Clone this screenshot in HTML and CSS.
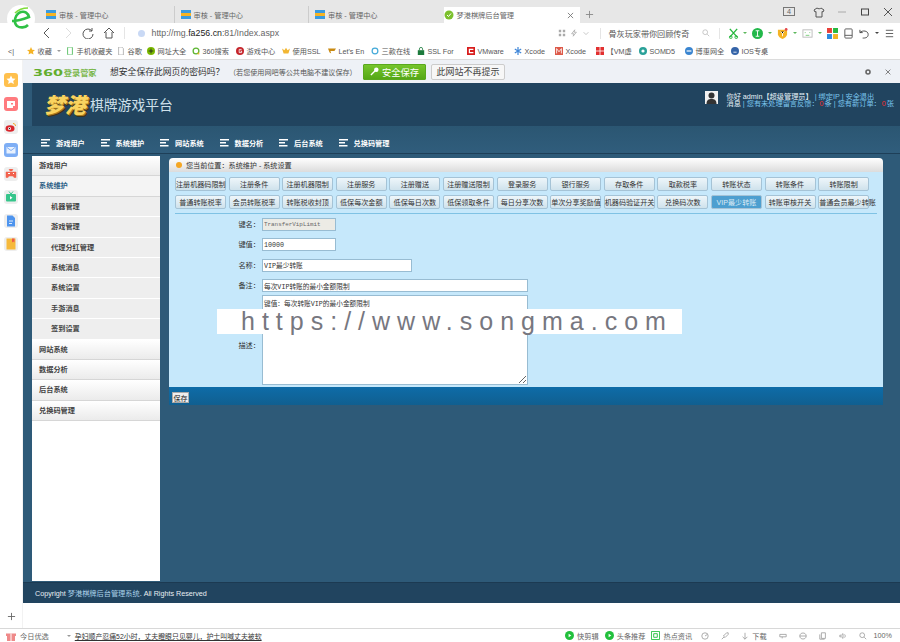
FILE: index.html
```html
<!DOCTYPE html>
<html lang="zh-CN">
<head>
    <meta charset="UTF-8">
    <title>梦港棋牌后台管理</title>
    <link rel="stylesheet" href="styles.css">
</head>
<body>

<!-- browser logo sits over tab bar and toolbar -->
<svg class="browser-logo" viewBox="0 0 28 28">
    <circle cx="14" cy="14" r="14" fill="#fff"/>
    <path d="M5 16c7 0 12-2 17-4-1-4-4-6-8-5-6 2-8 10-4 14 3 2 8 2 11-1" fill="none" stroke="#2fc145" stroke-width="2.6"/>
    <path d="M8 8c3-3 8-5 13-5" fill="none" stroke="#7fdc3c" stroke-width="1.6"/>
</svg>

<div class="tabbar">
    <div class="tab"><span class="tab-icon"></span>审核 - 管理中心</div>
    <div class="tab"><span class="tab-icon"></span>审核 - 管理中心</div>
    <div class="tab"><span class="tab-icon"></span>审核 - 管理中心</div>
    <div class="tab tab-active">
        <svg class="ico-s" viewBox="0 0 10 10"><circle cx="5" cy="5" r="4.5" fill="#7cc02c"/><path d="M3 5l1.5 1.5L7 3.500" stroke="#fff" fill="none"/></svg>
        <span class="tab-title">梦港棋牌后台管理</span>
        <svg class="tab-close" viewBox="0 0 8 8"><path d="M1 1l6 6M7 1L1 7" stroke="#777"/></svg>
    </div>
    <svg class="tab-plus" viewBox="0 0 10 10"><path d="M5 1v8M1 5h8" stroke="#888"/></svg>
    <div class="win-btns">
        <span class="win-count">4</span>
        <svg viewBox="0 0 12 12"><path d="M4 2L1 4l1 2 1-.5V11h6V5.500l1 .5 1-2-3-2c-.5 1-3 1-4 0z" fill="none" stroke="#555"/></svg>
        <svg viewBox="0 0 12 12"><path d="M2 6h8" stroke="#aaa"/></svg>
        <svg viewBox="0 0 12 12"><rect x="2.500" y="3" width="7" height="6" fill="none" stroke="#444"/></svg>
        <svg viewBox="0 0 12 12"><path d="M2 2l8 8M10 2l-8 8" stroke="#555"/></svg>
    </div>
</div>

<div class="toolbar">
    <div class="nav-btns">
        <svg viewBox="0 0 12 12"><path d="M8 1L3 6l5 5" fill="none" stroke="#555"/></svg>
        <svg viewBox="0 0 12 12"><path d="M4 1l5 5-5 5" fill="none" stroke="#ddd"/></svg>
        <svg viewBox="0 0 12 12"><path d="M10 4a5 5 0 1 0 1 3M10 1v3H7" fill="none" stroke="#555"/></svg>
        <svg viewBox="0 0 12 12"><path d="M1 6l5-5 5 5M3 5v6h6V5" fill="none" stroke="#555"/></svg>
    </div>
    <div class="address">
        <span class="addr-dot"></span>
        <span class="addr-url">http://mg.<b>fa256.cn</b>:81/Index.aspx</span>
    </div>
    <div class="addr-tools">
        <svg viewBox="0 0 10 10"><path d="M1 1h3v3H1zM6 1h3v3H6zM1 6h3v3H1zM6 6h3v3H6z" fill="#aaa"/></svg>
        <svg viewBox="0 0 10 10"><path d="M6 1L2 6h3l-1 3 4-5H5z" fill="none" stroke="#aaa"/></svg>
        <svg viewBox="0 0 10 10"><path d="M2 4l3 3 3-3" fill="none" stroke="#bbb"/></svg>
    </div>
    <div class="search">
        <span class="search-text">骨灰玩家带你回顾传奇</span>
        <svg viewBox="0 0 10 10"><circle cx="4" cy="4" r="3" fill="none" stroke="#bbb"/><path d="M6.500 6.500L9 9" stroke="#bbb"/></svg>
    </div>
    <div class="ext-icons">
        <svg viewBox="0 0 12 12"><path d="M2 1l8 9M10 1L2 10" stroke="#27b83f" stroke-width="1.500"/><circle cx="3" cy="10" r="1.500" fill="none" stroke="#27b83f"/><circle cx="9" cy="10" r="1.500" fill="none" stroke="#27b83f"/></svg>
        <i class="caret"></i>
        <svg viewBox="0 0 12 12"><circle cx="6" cy="6" r="6" fill="#22b84a"/><path d="M4 3h4M6 3v6M4 9h4" stroke="#fff"/></svg>
        <i class="caret"></i>
        <svg viewBox="0 0 12 12"><path d="M1 2h10v5c0 2-3 4-5 5-2-1-5-3-5-5z" fill="#f5b324"/><circle cx="10" cy="1.500" r="1.500" fill="#e5484d"/><path d="M4 4l2 2 2-2M6 6v3" stroke="#fff"/></svg>
        <i class="caret"></i>
        <svg viewBox="0 0 12 12"><rect x="1" y="2" width="10" height="8" fill="none" stroke="#bbb"/><path d="M3 5h1M8 5h1M4 8h4" stroke="#7c7"/></svg>
        <i class="caret"></i>
        <svg viewBox="0 0 10 10"><rect width="4.500" height="4.500" fill="#e8403a"/><rect x="5.500" width="4.500" height="4.500" fill="#27b83f"/><rect y="5.500" width="4.500" height="4.500" fill="#2d8be0"/><rect x="5.500" y="5.500" width="4.500" height="4.500" fill="#f5b324"/></svg>
        <svg viewBox="0 0 12 12"><rect x="2" y="1" width="8" height="10" rx="1" fill="none" stroke="#555"/><path d="M2 8h8" stroke="#555"/></svg>
        <svg viewBox="0 0 12 12"><path d="M1 2v3h3M1 5c3-3 9-2 9 2s-4 4-6 4" fill="none" stroke="#444"/></svg>
        <i class="caret caret-dark"></i>
        <svg viewBox="0 0 12 12"><path d="M2 2.500h8M2 6h8M2 9.500h8" stroke="#555"/></svg>
    </div>
</div>

<div class="bookmarks">
    <span class="bm-toggle">&lt;|</span>
    <span class="bm w39"><svg viewBox="0 0 10 10"><path d="M5 0l1.500 3.300 3.500.4-2.600 2.300.8 3.500L5 7.700 1.800 9.500l.8-3.500L0 3.700l3.500-.4z" fill="#f5b324"/></svg>收藏 <i class="caret caret-grey"></i></span>
    <span class="bm w51"><svg viewBox="0 0 10 10"><rect x="2" y="0" width="6" height="10" rx="1" fill="none" stroke="#3db54a"/></svg>手机收藏夹</span>
    <span class="bm w30"><svg viewBox="0 0 10 10"><path d="M2 0h4l2 2v8H2z" fill="none" stroke="#aaa"/></svg>谷歌</span>
    <span class="bm w45"><svg viewBox="0 0 10 10"><circle cx="5" cy="5" r="5" fill="#7ab800"/><path d="M2 5h6M5 2v6" stroke="#222"/></svg>网址大全</span>
    <span class="bm w44"><svg viewBox="0 0 10 10"><circle cx="5" cy="5" r="3.600" fill="none" stroke="#5cb531" stroke-width="1.600"/><path d="M7 7l2 2" stroke="#f5b324" stroke-width="1.600"/></svg>360搜索</span>
    <span class="bm w46"><svg viewBox="0 0 10 10"><circle cx="5" cy="5" r="5" fill="#c5252b"/><path d="M7 3H4v4h3V5H5.500" stroke="#fff" fill="none"/></svg>游戏中心</span>
    <span class="bm w46"><svg viewBox="0 0 10 10"><path d="M0 2l2 6h6l2-6-3 2-2-3-2 3z" fill="#f2b632"/></svg>使用SSL</span>
    <span class="bm w43"><svg viewBox="0 0 10 10"><path d="M0 2h10L8 5H3l1 3L2 7z" fill="#c98a12"/></svg>Let's En</span>
    <span class="bm w46"><svg viewBox="0 0 10 10"><circle cx="5" cy="5" r="3.600" fill="none" stroke="#43a9d8" stroke-width="1.500"/></svg>三款在线</span>
    <span class="bm w50"><svg viewBox="0 0 10 10"><rect x="1" y="4" width="8" height="6" fill="#1c7a3c"/><path d="M3 4V2.500a2 2 0 0 1 4 0V4" fill="none" stroke="#1c7a3c"/></svg>SSL For</span>
    <span class="bm w47"><svg viewBox="0 0 10 10"><rect width="10" height="10" fill="#d81e1e"/><path d="M8 3H3v4h5" stroke="#fff" stroke-width="1.500" fill="none"/></svg>VMware</span>
    <span class="bm w41"><svg viewBox="0 0 10 10"><path d="M5 0v10M1 2.500l8 5M9 2.500l-8 5" stroke="#3f86d8" stroke-width="1.500"/></svg>Xcode</span>
    <span class="bm w41"><svg viewBox="0 0 10 10"><rect width="10" height="10" fill="#dd5a4a"/><path d="M2 8V2l3 4 3-4v6" stroke="#fff" fill="none"/></svg>Xcode</span>
    <span class="bm w43"><svg viewBox="0 0 10 10"><rect width="10" height="10" fill="#e23030"/><path d="M0 5h10M5 0v10" stroke="#fff"/></svg>【VM虚</span>
    <span class="bm w46"><svg viewBox="0 0 10 10"><circle cx="5" cy="5" r="5" fill="#2aa198"/><circle cx="5" cy="5" r="2" fill="#fff"/></svg>SOMD5</span>
    <span class="bm w46"><svg viewBox="0 0 10 10"><circle cx="5" cy="5" r="5" fill="#3a85d0"/><path d="M2 5h6" stroke="#fff" stroke-width="1.500"/></svg>博惠网全</span>
    <span class="bm"><svg viewBox="0 0 10 10"><circle cx="5" cy="5" r="5" fill="#3564a8"/><path d="M3 6.500h4" stroke="#fff"/></svg>IOS专桌</span>
</div>

<div class="frame">
    <div class="rail">
        <span class="rail-btn"><svg viewBox="0 0 14 14"><rect width="14" height="14" rx="3" fill="#ffc04d"/><path d="M7 2.500l1.400 3 3.100.3-2.300 2.100.7 3.100L7 9.500l-2.900 1.500.7-3.100-2.300-2.100 3.100-.3z" fill="#fff"/></svg></span>
        <span class="rail-btn"><svg viewBox="0 0 14 14"><rect width="14" height="14" rx="3" fill="#ff7b7f"/><path d="M3 4h8v5H9v2H3z" fill="#fff"/><path d="M7 6h2v1.500H7z" fill="#ff7b7f"/></svg></span>
        <span class="rail-btn"><svg viewBox="0 0 14 14"><rect width="14" height="14" rx="3" fill="#eee"/><ellipse cx="6" cy="8.500" rx="4.500" ry="3.300" fill="#d9262c"/><circle cx="5.500" cy="8.500" r="1.500" fill="#fff"/><circle cx="5.500" cy="8.500" r=".7" fill="#222"/><path d="M9 3.500c1.500 0 2.500 1 2.500 2.500" fill="none" stroke="#f5a623"/></svg></span>
        <span class="rail-btn"><svg viewBox="0 0 14 14"><rect width="14" height="14" rx="3" fill="#7eaef5"/><rect x="2.500" y="4" width="9" height="6.500" rx=".6" fill="#e8f1fe"/><path d="M3 4.500l4 3 4-3" fill="none" stroke="#7eaef5"/></svg></span>
        <span class="rail-btn"><svg viewBox="0 0 14 14"><rect width="14" height="14" rx="3" fill="#eee"/><path d="M5 2l1 2h2l1-2M2 5h10v5.500h-2L9 9H5l-1 1.500H2z" fill="#f2624d" stroke="#f2624d" stroke-width=".5"/><path d="M4 6.500h2M9 6.500h1" stroke="#fff"/></svg></span>
        <span class="rail-btn"><svg viewBox="0 0 14 14"><rect width="14" height="14" rx="3" fill="#eee"/><rect x="2" y="4" width="10" height="7.500" rx="1" fill="#36c58b"/><path d="M5 1.500l2 2.500 2-2.500" fill="none" stroke="#36c58b"/><path d="M6 6l2.500 1.700L6 9.500z" fill="#fff"/></svg></span>
        <span class="rail-btn"><svg viewBox="0 0 14 14"><rect width="14" height="14" rx="3" fill="#eee"/><path d="M3 1.500h5.500L11 4v8.500H3z" fill="#4e94ee"/><path d="M5 7h4M5 9.500h3" stroke="#dcebfd"/></svg></span>
        <span class="rail-btn"><svg viewBox="0 0 14 14"><rect width="14" height="14" rx="3" fill="#eee"/><rect x="2.500" y="1.500" width="9" height="11" fill="#f6b93b"/><path d="M8 1.500h2.500v4L9.200 4.500 8 5.500z" fill="#ef5a4a"/></svg></span>
        <svg class="rail-add" viewBox="0 0 10 10"><path d="M5 1v8M1 5h8" stroke="#666"/></svg>
    </div>

    <div class="window">
        <div class="passbar">
            <span class="pass-brand"><b>360</b>登录管家</span>
            <span class="pass-ask">想安全保存此网页的密码吗？</span>
            <span class="pass-note">（若您使用网吧等公共电脑不建议保存）</span>
            <button class="pass-save">
                <svg viewBox="0 0 10 10"><circle cx="7" cy="3" r="2.500" fill="#fff"/><path d="M6 4L1 9" stroke="#fff" stroke-width="1.500"/></svg>
                安全保存
            </button>
            <button class="pass-never">此网站不再提示</button>
            <span class="pass-right">
                <svg viewBox="0 0 10 10"><circle cx="5" cy="5" r="2.500" fill="none" stroke="#666" stroke-width="2"/></svg>
                <svg viewBox="0 0 10 10"><path d="M2 2l6 6M8 2L2 8" stroke="#666"/></svg>
            </span>
        </div>

        <div class="page">
            <div class="header">
                <div class="brand">
                    <span class="brand-logo">梦港</span>
                    <span class="brand-name">棋牌游戏平台</span>
                </div>
                <div class="user">
                    <svg class="avatar" viewBox="0 0 13 13"><rect width="13" height="13" fill="#f2f2f2"/><circle cx="6.500" cy="4.500" r="3" fill="#333"/><path d="M1.500 13c0-4 2-5 5-5s5 1 5 5z" fill="#333"/></svg>
                    <div class="user-lines">
                        <div><span class="hl">你好 admin【超级管理员】</span> | 绑定IP | 安全退出</div>
                        <div><span class="hl">消息</span> | 您有未处理留言反馈：<em>0</em>条 | 您有新订单：<em>0</em>张</div>
                    </div>
                </div>
            </div>

            <div class="mainnav">
                <span class="nav-item">游戏用户</span>
                <span class="nav-item">系统维护</span>
                <span class="nav-item">网站系统</span>
                <span class="nav-item">数据分析</span>
                <span class="nav-item">后台系统</span>
                <span class="nav-item">兑换码管理</span>
            </div>

            <div class="work">
                <div class="sidebar">
                    <div class="side-top">游戏用户</div>
                    <div class="side-top side-open">系统维护</div>
                    <div class="side-sub">机器管理</div>
                    <div class="side-sub">游戏管理</div>
                    <div class="side-sub">代理分红管理</div>
                    <div class="side-sub">系统消息</div>
                    <div class="side-sub">系统设置</div>
                    <div class="side-sub">手游消息</div>
                    <div class="side-sub">签到设置</div>
                    <div class="side-top">网站系统</div>
                    <div class="side-top">数据分析</div>
                    <div class="side-top">后台系统</div>
                    <div class="side-top">兑换码管理</div>
                </div>

                <div class="panel">
                    <div class="crumbs">
                        <span class="crumb-dot"></span>
                        <span>您当前位置：系统维护 - 系统设置</span>
                    </div>
                    <div class="panel-body">
                        <div class="key-tabs">
                            <button class="key-tab">注册机器码限制</button>
                            <button class="key-tab">注册条件</button>
                            <button class="key-tab">注册机器限制</button>
                            <button class="key-tab">注册服务</button>
                            <button class="key-tab">注册赠送</button>
                            <button class="key-tab">注册赠送限制</button>
                            <button class="key-tab">登录服务</button>
                            <button class="key-tab">银行服务</button>
                            <button class="key-tab">存取条件</button>
                            <button class="key-tab">取款税率</button>
                            <button class="key-tab">转账状态</button>
                            <button class="key-tab">转账条件</button>
                            <button class="key-tab">转账限制</button>
                            <button class="key-tab">普通转账税率</button>
                            <button class="key-tab">会员转账税率</button>
                            <button class="key-tab">转账税收封顶</button>
                            <button class="key-tab">低保每次金额</button>
                            <button class="key-tab">低保每日次数</button>
                            <button class="key-tab">低保领取条件</button>
                            <button class="key-tab">每日分享次数</button>
                            <button class="key-tab">单次分享奖励值</button>
                            <button class="key-tab">机器码验证开关</button>
                            <button class="key-tab">兑换码次数</button>
                            <button class="key-tab key-tab-on">VIP最少转账</button>
                            <button class="key-tab">转账审核开关</button>
                            <button class="key-tab">普通会员最少转账</button>
                        </div>
                        <div class="form">
                            <label class="field">
                                <span class="field-label">键名：</span>
                                <input class="field-short field-mono" value="TransferVipLimit" readonly>
                            </label>
                            <label class="field">
                                <span class="field-label">键值：</span>
                                <input class="field-short field-white" value="10000">
                            </label>
                            <label class="field">
                                <span class="field-label">名称：</span>
                                <input class="field-mid field-white" value="VIP最少转账">
                            </label>
                            <label class="field field-tight">
                                <span class="field-label">备注：</span>
                                <input class="field-long field-white" value="每次VIP转账的最小金额限制">
                            </label>
                            <label class="field field-area">
                                <span class="field-label">描述：</span>
                                <textarea class="field-long field-white">键值：每次转账VIP的最小金额限制</textarea>
                            </label>
                        </div>
                    </div>
                    <div class="panel-foot"><button class="save-btn">保存</button></div>
                </div>
            </div>

            <div class="footer">Copyright <span class="footer-name">梦港棋牌后台管理系统</span>. All Rights Reserved</div>
        </div>
        <div class="page-gap"></div>
    </div>
</div>

<div class="statusbar">
    <svg class="ico-s" viewBox="0 0 10 10"><path d="M0 2.500h10V5H0zM1 5h8v5H1z" fill="#ef8a8a"/><path d="M5 2.500V10" stroke="#fff"/></svg>
    <span class="st-today">今日优选</span>
    <i class="caret st-caret"></i>
    <span class="st-news">孕妇顺产忍痛52小时，丈夫瞪眼只见婴儿，护士叫喊丈夫被软</span>
    <span class="st-right">
        <span class="st-feeds">
            <span class="st-item"><svg viewBox="0 0 10 10"><circle cx="5" cy="5" r="5" fill="#22c03c"/><path d="M4 3l3 2-3 2z" fill="#fff"/></svg>快剪辑</span>
            <span class="st-item"><svg viewBox="0 0 10 10"><circle cx="5" cy="5" r="5" fill="#22c03c"/><path d="M4 3l3 2-3 2z" fill="#fff"/></svg>头条推荐</span>
            <span class="st-item"><svg viewBox="0 0 10 10"><path d="M.500.500h9v9h-9zM3 3h4v4H3z" fill="none" stroke="#22c03c"/></svg>热点资讯</span>
        </span>
        <svg class="st-ico" viewBox="0 0 10 10"><circle cx="5" cy="5" r="4" fill="none" stroke="#999"/><path d="M5 5l3-2" stroke="#999"/></svg>
        <svg class="st-ico" viewBox="0 0 10 10"><path d="M1 9l3-3M3 5l4-4h2v2L5 7z" fill="none" stroke="#999"/></svg>
        <span class="st-item"><svg viewBox="0 0 10 10"><path d="M5 1v8M2 6l3 3 3-3" fill="none" stroke="#999"/></svg>下载</span>
        <svg class="st-ico" viewBox="0 0 10 10"><path d="M1 3h8v3H1zM4 6v2" fill="none" stroke="#999"/></svg>
        <svg class="st-ico" viewBox="0 0 10 10"><path d="M1 5c0-5 8-5 8 0s-8 5-8 0M1 5h8" fill="none" stroke="#999"/></svg>
        <svg class="st-ico" viewBox="0 0 10 10"><path d="M3 1h5v7H3zM1 3v6h6" fill="none" stroke="#999"/></svg>
        <svg class="st-ico" viewBox="0 0 10 10"><path d="M1 4h2l2-2v6L3 6H1zM7 3c1 1 1 3 0 4" fill="none" stroke="#999"/></svg>
        <svg class="st-ico" viewBox="0 0 10 10"><circle cx="4" cy="4" r="3" fill="none" stroke="#999"/><path d="M6.500 6.500L9 9" stroke="#999"/></svg>
        <span class="st-zoom">100%</span>
    </span>
</div>

<div class="watermark">https://www.songma.com</div>

</body>
</html>
```

FILE: styles.css
```css
* {
    box-sizing: border-box;
}
html, body {
    margin: 0;
    height: 100%;
}
body {
    position: relative;
    width: 900px;
    height: 642px;
    overflow: hidden;
    display: flex;
    flex-direction: column;
    background: #fff;
    color: #333;
    font-family: "Liberation Sans", "Noto Sans CJK SC", sans-serif;
    font-size: 7.200px;
}
svg {
    flex: none;
    display: block;
}
i, em {
    font-style: normal;
}
button, input, textarea {
    font-family: inherit;
}
.caret {
    flex: none;
    width: 0;
    height: 0;
    border: 2px solid transparent;
    border-top: 2px solid #5cb85c;
    border-bottom: 0;
}
.caret-dark {
    border-top-color: #444;
}
.caret-grey {
    border-top-color: #999;
    margin-left: 3px;
}
.ico-s {
    width: 10px;
    height: 10px;
}

/* browser chrome */
.browser-logo {
    position: absolute;
    left: 7px;
    top: 5px;
    width: 28px;
    height: 28px;
}
.tabbar {
    height: 23px;
    flex: none;
    display: flex;
    align-items: center;
    padding: 0 0 0 40px;
    background: #e7e7e7;
    color: #666;
}
.tab {
    width: 134.500px;
    height: 17px;
    margin-top: 6px;
    display: flex;
    align-items: center;
    gap: 3px;
    padding-left: 6px;
    border-right: 1px solid #ccc;
}
.tab:nth-child(n+3) {
    border-right: 0;
}
.tab-icon {
    width: 10px;
    height: 9px;
    background: linear-gradient(#3a9be0 0 33%, #f5b324 33% 66%, #3a9be0 66%);
}
.tab-active {
    width: 136px;
    height: 16px;
    margin-top: 7px;
    padding-left: 0;
    background: #fff;
}
.tab-title {
    flex: 1;
}
.tab-close {
    width: 7px;
    height: 7px;
    margin-right: 6px;
}
.tab-plus {
    width: 9px;
    height: 9px;
    margin: 5px 0 0 5px;
}
.win-btns {
    margin-left: auto;
    display: flex;
    align-items: center;
    gap: 11px;
    padding-right: 6px;
}
.win-btns svg {
    width: 12px;
    height: 12px;
}
.win-count {
    width: 12px;
    height: 9px;
    border: 1px solid #777;
    line-height: 7px;
    text-align: center;
    margin-right: 7px;
}
.toolbar {
    height: 20px;
    flex: none;
    display: flex;
    align-items: center;
    padding-left: 41px;
}
.nav-btns {
    display: flex;
    gap: 8.500px;
    padding-right: 9px;
    border-right: 1px solid #e5e5e5;
}
.nav-btns svg {
    width: 12px;
    height: 12px;
}
.address {
    width: 420px;
    margin-left: 13px;
    display: flex;
    align-items: center;
    gap: 7px;
    font-size: 8.800px;
    color: #666;
}
.addr-dot {
    width: 7px;
    height: 7px;
    border-radius: 50%;
    background: #c9d9f5;
}
.addr-url b {
    font-weight: normal;
    color: #222;
}
.addr-tools {
    display: flex;
    align-items: center;
    gap: 4px;
    width: 42px;
}
.addr-tools svg {
    width: 8px;
    height: 8px;
}
.search {
    width: 120px;
    display: flex;
    align-items: center;
    justify-content: space-between;
    padding: 0 9px 0 8px;
    border-left: 1px solid #e5e5e5;
    border-right: 1px solid #e5e5e5;
    font-size: 8.100px;
    color: #555;
}
.search svg {
    width: 8px;
    height: 8px;
}
.ext-icons {
    flex: 1;
    display: flex;
    align-items: center;
    gap: 3px;
    padding: 0 5px 0 8px;
    justify-content: space-between;
}
.ext-icons svg {
    width: 11px;
    height: 11px;
}
.bookmarks {
    height: 17px;
    flex: none;
    display: flex;
    align-items: center;
    padding-left: 8px;
    border-bottom: 1px solid #dcdcdc;
    white-space: nowrap;
    color: #555;
}
.bm {
    flex: none;
    display: flex;
    align-items: center;
    gap: 2.500px;
}
.bm svg {
    width: 8px;
    height: 8px;
}
.bm-toggle {
    width: 19px;
    flex: none;
}
.w30 { width: 30px; }
.w39 { width: 39px; }
.w41 { width: 41px; }
.w43 { width: 43px; }
.w44 { width: 44px; }
.w45 { width: 45px; }
.w46 { width: 46px; }
.w47 { width: 47px; }
.w50 { width: 50px; }
.w51 { width: 51px; }

/* left rail */
.frame {
    flex: 1;
    display: flex;
    min-height: 0;
}
.rail {
    position: relative;
    width: 23px;
    flex: none;
    display: flex;
    flex-direction: column;
    padding-top: 8.500px;
    align-items: center;
    background: #fff;
    border-right: 1px solid #f2f2f2;
}
.rail-btn {
    height: 23.400px;
    display: flex;
    align-items: center;
    justify-content: center;
}
.rail-btn svg {
    width: 14px;
    height: 14px;
}
.rail-add {
    position: absolute;
    left: 7px;
    top: 552px;
    width: 9px;
    height: 9px;
}

/* password bar */
.window {
    flex: 1;
    min-width: 0;
    display: flex;
    flex-direction: column;
}
.passbar {
    height: 23px;
    flex: none;
    display: flex;
    align-items: center;
    padding-left: 10px;
    background: #eef1f6;
    white-space: nowrap;
}
.pass-brand {
    width: 77px;
    color: #7cb84e;
    font-weight: bold;
    font-size: 8.200px;
}
/* the 360 mark is a stretched, wide figure */
.pass-brand b {
    display: inline-block;
    margin-right: 12px;
    font-family: "DejaVu Sans", sans-serif;
    font-size: 9px;
    color: #62ad2c;
    transform: scaleX(1.6);
    transform-origin: left center;
}
.pass-ask {
    font-size: 8.800px;
    width: 119px;
}
.pass-note {
    color: #555;
    width: 134px;
    font-size: 7.100px;
}
.pass-save {
    width: 63px;
    height: 16px;
    padding: 0;
    display: flex;
    align-items: center;
    justify-content: center;
    gap: 3px;
    border: 1px solid #5aa81e;
    border-radius: 1px;
    background: linear-gradient(#76c52c, #55a816);
    color: #fff;
    font-size: 9.300px;
}
.pass-save svg {
    width: 9px;
    height: 9px;
}
.pass-never {
    width: 74px;
    height: 16px;
    margin-left: 5px;
    padding: 0;
    border: 1px solid #ccc;
    border-radius: 2px;
    background: #f7f7f7;
    color: #444;
    font-size: 9px;
}
.pass-right {
    margin-left: auto;
    display: flex;
    gap: 12px;
    padding-right: 8px;
}
.pass-right svg {
    width: 8px;
    height: 8px;
}

/* admin page */
.page {
    height: 520px;
    flex: none;
    display: flex;
    flex-direction: column;
    background: #2e5a78;
}
.page-gap {
    flex: 1;
}
.header {
    height: 43px;
    flex: none;
    margin-left: 9px;
    padding: 8px 6px 0 12px;
    display: flex;
    justify-content: space-between;
    background: #21445f;
}
.brand {
    display: flex;
    align-items: center;
    height: 26px;
    gap: 4px;
}
.brand-logo {
    font-family: "Noto Sans CJK SC", sans-serif;
    font-weight: 900;
    font-style: italic;
    font-size: 21px;
    line-height: 26px;
    color: #f9d360;
    text-shadow: 1px 1px 0 #a87a1e, 2px 2px 0 #3a3218;
}
.brand-name {
    font-size: 13.800px;
    color: #cfe0ea;
}
.user {
    display: flex;
    gap: 8px;
    color: #7cc6ee;
}
.avatar {
    width: 13px;
    height: 13px;
}
.user-lines {
    padding-top: 2px;
    line-height: 7px;
    white-space: nowrap;
}
.hl {
    color: #e6f2f8;
}
.user-lines em {
    color: #f03030;
    margin: 0 1px;
}
.mainnav {
    height: 28px;
    flex: none;
    display: flex;
    align-items: center;
    padding: 6px 0 0 18px;
    background: linear-gradient(#2b5672, #305d7c);
    border-bottom: 1px solid #1e3f58;
    color: #fff;
    font-weight: bold;
}
.nav-item {
    width: 59.500px;
    display: flex;
    align-items: center;
    gap: 6px;
}
/* three white bars in front of each menu entry */
.nav-item::before {
    content: "";
    width: 9px;
    height: 8px;
    background:
        linear-gradient(#fff, #fff) 0 0 / 9px 1.500px no-repeat,
        linear-gradient(#fff, #fff) 0 3px / 6px 1.500px no-repeat,
        linear-gradient(#fff, #fff) 0 6px / 8.500px 1.500px no-repeat;
}
.work {
    flex: 1;
    display: flex;
    align-items: flex-start;
    padding: 2px 0 0 9px;
    min-height: 0;
}
.sidebar {
    width: 128px;
    height: 425px;
    flex: none;
    background: #fff;
    border-radius: 3px 3px 0 0;
    font-weight: bold;
    color: #444;
}
.side-top {
    height: 20.400px;
    padding-left: 7px;
    line-height: 20.400px;
    background: linear-gradient(#fff, #ebebeb);
    border-bottom: 1px solid #d6d6d6;
}
.side-open {
    color: #2d5f86;
    background: #f4f4f4;
}
.side-sub {
    height: 20.400px;
    padding-left: 19px;
    line-height: 20.400px;
    background: #eee;
    border-bottom: 1px solid #fff;
}
.panel {
    width: 714px;
    margin: 2px 0 0 9px;
    flex: none;
}
.crumbs {
    height: 14px;
    display: flex;
    align-items: center;
    gap: 4px;
    padding: 0 0 1px 7px;
    border-radius: 4px 4px 0 0;
    background: linear-gradient(#fff, #dcdcdc);
    font-size: 7.100px;
}
.crumb-dot {
    width: 6px;
    height: 6px;
    border-radius: 50%;
    background: #f5a623;
}
.panel-body {
    height: 215px;
    padding: 5px 0 0 6px;
    background: #c6e8fb;
}
.key-tabs {
    display: grid;
    grid-template-columns: repeat(13, 51px);
    grid-auto-rows: 14px;
    column-gap: 2.600px;
    row-gap: 4px;
    padding-bottom: 4px;
    border-bottom: 1px solid #7fc2e4;
    margin-right: 6px;
}
.key-tab {
    padding: 0;
    overflow: visible;
    white-space: nowrap;
    border: 1px solid #a5c3d6;
    border-radius: 2px;
    background: linear-gradient(#eef6fa, #cfe2ec);
    font-size: 7.100px;
    color: #333;
}
.key-tab-on {
    background: #4d9fd0;
    color: #dcebf5;
}
.form {
    padding-top: 4px;
}
.field {
    display: flex;
    height: 20.400px;
    align-items: flex-start;
}
.field-tight {
    height: 16px;
}
.field-area {
    height: 92px;
}
.field-area .field-label {
    align-self: center;
    padding-top: 9px;
}
.field-label {
    width: 87px;
    padding-right: 2px;
    text-align: right;
    line-height: 13px;
}
.field input, .field textarea {
    display: block;
    height: 13px;
    padding: 0 1px;
    border: 1px solid #98bcd2;
    font-family: "Liberation Mono", "Noto Sans CJK SC", monospace;
    font-size: 6.700px;
    color: #333;
    outline: 0;
}
.field textarea {
    height: 90px;
    resize: both;
    padding-top: 2px;
}
.field-short {
    width: 74px;
}
.field-mid {
    width: 150px;
}
.field-long {
    width: 266px;
}
.field-white {
    background: #fff;
}
.field .field-mono {
    background: #ecebe5;
    color: #666;
    font-size: 5.900px;
}
.panel-foot {
    height: 18px;
    padding: 5px 0 0 3px;
    background: linear-gradient(#0e6ca8, #105f90);
}
.save-btn {
    display: block;
    width: 17px;
    height: 11px;
    padding: 0;
    border: 1px solid #aaa;
    background: #eee;
    font-size: 7px;
    color: #222;
}
.footer {
    height: 21px;
    flex: none;
    padding-left: 12px;
    line-height: 21px;
    background: #21445f;
    border-top: 1px solid #1c3a52;
    color: #e8eff3;
}
.footer-name {
    color: #a9d0e8;
}

/* status bar */
.statusbar {
    height: 14px;
    flex: none;
    display: flex;
    align-items: center;
    padding: 0 8px 0 6px;
    border-top: 1px solid #d8d8d8;
    color: #666;
    white-space: nowrap;
}
.st-today {
    margin-left: 4px;
}
.st-caret {
    margin-left: 18px;
    border-top-color: #999;
}
.st-news {
    margin-left: 4px;
    font-size: 6.900px;
    color: #333;
    text-decoration: underline;
}
.st-right {
    margin-left: auto;
    display: flex;
    align-items: center;
    gap: 12px;
}
.st-feeds {
    display: flex;
    gap: 6px;
    margin-right: -3px;
}
.st-item {
    display: flex;
    align-items: center;
    gap: 3px;
}
.st-item svg, .st-ico {
    width: 8px;
    height: 8px;
}
.st-feeds svg {
    width: 9px;
    height: 9px;
}
.st-zoom {
    margin-left: -5px;
}

/* watermark strip over the form */
.watermark {
    position: absolute;
    left: 217px;
    top: 309px;
    width: 465px;
    height: 25px;
    background: #fff;
    padding-left: 24px;
    color: #77777f;
    font-size: 25px;
    line-height: 25px;
    letter-spacing: 7px;
    white-space: nowrap;
}
```
